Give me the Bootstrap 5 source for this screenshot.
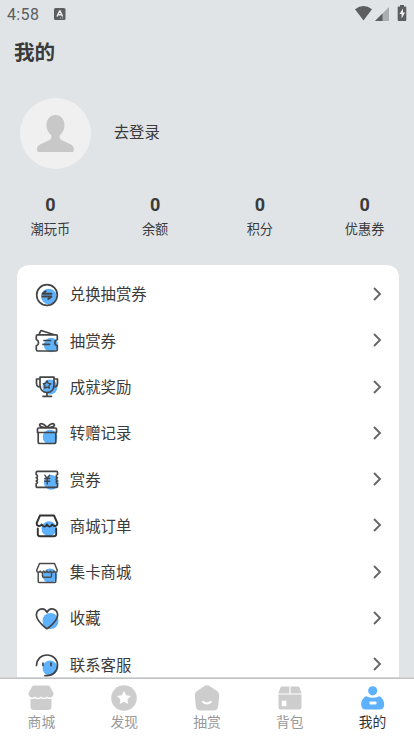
<!DOCTYPE html>
<html lang="zh-CN">
<head>
<meta charset="utf-8">
<meta name="viewport" content="width=device-width, initial-scale=1">
<title>我的</title>
<link href="https://cdn.jsdelivr.net/npm/bootstrap@5.3.0/dist/css/bootstrap.min.css" rel="stylesheet">
<style>
body{height:736px;background:#e0e4e7;color:#3b3b3b;font-family:Roboto,"Noto Sans CJK SC",sans-serif}
.status{height:28px;padding:0 7px;color:#5c5e60;font-size:16px;line-height:28px;letter-spacing:.35px}
.status span{padding-top:1px}
.title{height:48px;line-height:50px;padding-left:14px;font-size:20.6px;font-weight:700}
.profile{height:70px;margin-top:22px;padding-left:20px;font-size:15.4px}
.profile span{padding-top:2px;margin-left:-1.3px}
.avatar{width:71px;height:71px;background:#f0f0f0}
.stats{margin-top:26px;height:71px;margin-left:-2px;margin-right:-3px}
.num{font-size:18px;line-height:22px;font-weight:700}
.lbl{font-size:13.2px;line-height:20px;margin-top:4px}
.menu{margin:0 15px 0 17px;border-radius:12px 12px 0 0;padding-top:6.6px}
.menu-row{height:46.3px;flex:none;padding:0 16px 0 17.6px;font-size:15.4px}
.menu-row span{margin-left:11.2px;padding-top:2.4px}
.ico{fill:none;stroke:#444;stroke-width:1.7;stroke-linejoin:round;stroke-linecap:round}
.ico .b{fill:#5db1fd;stroke:none}
.chev{fill:none;stroke:#666;stroke-width:1.9;position:relative;top:-.8px}
.tabs{height:58px;flex:none;border-top:1px solid #bfc1c2;box-shadow:0 -1px 0 #d5d7d8;z-index:1}
.tab{color:#999;font-size:13.8px;line-height:20px;padding-top:4.6px}
.tab svg{fill:#cdcdcd;display:block}
.tab div{margin-top:.4px}
.tab.on{color:#333}.tab.on svg{fill:#5db1fd}
</style>
<script src="https://cdn.jsdelivr.net/npm/bootstrap@5.3.0/dist/js/bootstrap.bundle.min.js"></script>
</head>
<body class="d-flex flex-column overflow-hidden">
<header class="status d-flex align-items-center flex-shrink-0">
  <span>4:58</span>
  <svg width="12" height="12" viewBox="0 0 12 12" style="margin-left:15px"><rect width="11.500" height="12" rx="1.500" fill="#5c5e60"/><path d="M3 8.500 5.600 3h.5l2.500 5.500M4.200 6.700h3.300" fill="none" stroke="#eee" stroke-width="1.400"/><path d="M6 10h1m1 0h1" stroke="#ccc"/></svg>
  <svg class="ms-auto" width="55" height="18" viewBox="352 5 55 18"><path d="M355 9.200Q363.500 3 372 9.200L363.500 20.500Z" fill="#5c5e60"/><path d="M389 7v14h-14z" fill="#abaeb0"/><path d="M382.500 13.500V21H375z" fill="#5c5e60"/><path d="M400 6.500V5h4v1.500h1.500q.8 0 .8.800v12.900q0 .8-.8.800h-7q-.8 0-.8-.8V7.300q0-.8.800-.8z" fill="#5c5e60"/><path d="m403 8.500-3.600 5.500h2.200v4.500l3.500-6h-2.100z" fill="#eee"/></svg>
</header>
<h1 class="title m-0 flex-shrink-0">我的</h1>
<section class="profile d-flex align-items-center flex-shrink-0">
  <div class="avatar rounded-circle d-flex justify-content-center align-items-center me-4 flex-shrink-0">
    <svg width="71" height="71" viewBox="0 0 71 71"><path d="M35.500 17c5.500 0 9 4.500 9 10 0 4.500-2 8-4.700 10.200-.8 3 .7 4.500 3.700 5.800l7 3.200c3 1.400 3.500 3.500 3.300 6.300q-.2 1.500-1.700 1.500H18.800q-1.700 0-1.800-1.500c-.2-2.800.5-4.900 3.500-6.300l7-3.200c3-1.300 4.500-2.800 3.700-5.800-2.700-2.200-4.700-5.700-4.700-10.200 0-5.500 3.500-10 9-10z" fill="#c8c8c8"/></svg>
  </div>
  <span>去登录</span>
</section>
<section class="stats d-flex text-center flex-shrink-0">
  <div class="col"><div class="num">0</div><div class="lbl">潮玩币</div></div>
  <div class="col"><div class="num">0</div><div class="lbl">余额</div></div>
  <div class="col"><div class="num">0</div><div class="lbl">积分</div></div>
  <div class="col"><div class="num">0</div><div class="lbl">优惠券</div></div>
</section>
<main class="menu bg-white d-flex flex-column flex-grow-1 overflow-hidden">
  <div class="menu-row d-flex align-items-center"><svg class="ico" width="24" height="24"><circle class="b" cx="13.800" cy="13.500" r="7.800"/><circle cx="12" cy="12" r="10.300"/><path d="M7.500 10.700h9M7.700 10.500l3-2.200M7.500 13.500h9M16.300 13.700l-3 2.400" stroke-width="1.900"/></svg><span>兑换抽赏券</span><svg class="chev ms-auto" width="12" height="16"><path d="m3 2 6 6-6 6"/></svg></div>
  <div class="menu-row d-flex align-items-center"><svg class="ico" width="24" height="24"><circle class="b" cx="16" cy="16" r="7.200"/><path d="M2.500 5.800h18.500q1.300 0 1.300 1.200v3.500c-3.300 1.300-3.300 5 0 6.300v3.700q0 1.500-1.500 1.500h-18q-1.500 0-1.500-1.500v-3.700c3-1.300 3-5 0-6.300V7.300q0-1.500 1.200-1.500zM4 5.500l1.500-3.200q.4-.8 1.300-.5L18.500 5.500M9 11.500h6.500M8 15.300h6.500"/></svg><span>抽赏券</span><svg class="chev ms-auto" width="12" height="16"><path d="m3 2 6 6-6 6"/></svg></div>
  <div class="menu-row d-flex align-items-center"><svg class="ico" width="24" height="24"><circle class="b" cx="15" cy="12" r="7.500"/><path d="M5 2.200h14V10c0 4-2.300 7.500-7 7.500S5 14 5 10zM5 4H1.500v4.500c0 2.300 1.600 3.500 4 3.700M19 4h3.500v4.500c0 2.300-1.600 3.500-4 3.700M12 17.500v3.500M8 21.300h8.500"/><path d="m12 5.900 1.200 2.400 2.600.4-1.900 1.900.4 2.600-2.300-1.200-2.300 1.200.4-2.600-1.900-1.900 2.600-.4z" stroke-width="1.300"/></svg><span>成就奖励</span><svg class="chev ms-auto" width="12" height="16"><path d="m3 2 6 6-6 6"/></svg></div>
  <div class="menu-row d-flex align-items-center"><svg class="ico" width="24" height="24"><circle class="b" cx="15" cy="15" r="7.300"/><path d="M3.500 6h17q1 0 1 1v3.500h-19V7q0-1 1-1zM3.200 10.500v9.200q0 1.800 1.800 1.800h14q1.800 0 1.800-1.800v-9.200M12 5.800C10 2.700 6.500.8 5 2.200S6 5.800 12 5.800zM12 5.800C14 2.700 17.500.8 19 2.200S18 5.800 12 5.800z"/></svg><span>转赠记录</span><svg class="chev ms-auto" width="12" height="16"><path d="m3 2 6 6-6 6"/></svg></div>
  <div class="menu-row d-flex align-items-center"><svg class="ico" width="24" height="24" viewBox="0 0 24.500 24"><circle class="b" cx="16.500" cy="14.500" r="7.500"/><path d="M2.500 3.200h19.500q1 0 1 1v2.200c-1.800.7-1.800 2.700 0 3.300-1.800.7-1.800 2.700 0 3.300-1.800.7-1.800 2 0 2.800v2.800q0 1-1 1H2.500q-1.300 0-1.300-1.300v-2.500c1.800-.8 1.800-2.100 0-2.800 1.800-.6 1.800-2.600 0-3.300 1.800-.6 1.800-2.600 0-3.300V4.500q0-1.300 1.300-1.300z"/><path d="m10 7 2.500 3.300L15 7M12.500 10.300v5.700M10 10.500h5M10 13.300h5" stroke-width="1.400"/></svg><span>赏券</span><svg class="chev ms-auto" width="12" height="16"><path d="m3 2 6 6-6 6"/></svg></div>
  <div class="menu-row d-flex align-items-center"><svg class="ico" width="24" height="24"><circle class="b" cx="14" cy="14.800" r="7.500"/><path d="M5 1.500h14l3.300 7.500c.3 3-3.300 4.200-5 1.400-1.700 3-4 3-5.300 0-1.300 3-3.600 3-5.300 0-1.700 2.800-5.300 1.600-5-1.400zM2.800 14.500v5.500q0 2.200 2.200 2.200h14q2.200 0 2.200-2.200v-5.500" stroke="#333" stroke-width="1.900"/></svg><span>商城订单</span><svg class="chev ms-auto" width="12" height="16"><path d="m3 2 6 6-6 6"/></svg></div>
  <div class="menu-row d-flex align-items-center"><svg class="ico" width="24" height="24"><circle class="b" cx="15" cy="14.800" r="7.300"/><path stroke-width="1.500" stroke="#4c4c4c" d="M4.500 2.500h15l2.800 6.800c0 2.500-2.600 2.500-3.500.8-.7 1.700-2.800 1.700-3.400 0-.7 1.700-2.700 1.700-3.400 0-.7 1.700-2.700 1.700-3.400 0-.6 1.700-2.700 1.700-3.400 0-.9 1.700-3.500 1.700-3.500-.8zM3.200 11v9.500q0 1 1 1h15.600q1 0 1-1V11M7.500 11.500v3.800q0 1 1 1h7q1 0 1-1v-3.800"/></svg><span>集卡商城</span><svg class="chev ms-auto" width="12" height="16"><path d="m3 2 6 6-6 6"/></svg></div>
  <div class="menu-row d-flex align-items-center"><svg class="ico" width="24" height="24"><circle class="b" cx="15.500" cy="14" r="8"/><path d="M12 5.300C9-.7 1.400 1.800 1.400 8.200c0 4.800 4.600 8.800 9.400 12.800q1.200 1 2.400 0c4.800-4 9.400-8 9.400-12.800C22.600 1.800 15-.7 12 5.300z"/></svg><span>收藏</span><svg class="chev ms-auto" width="12" height="16"><path d="m3 2 6 6-6 6"/></svg></div>
  <div class="menu-row d-flex align-items-center"><svg class="ico" width="24" height="24"><circle class="b" cx="15" cy="15" r="7.500"/><path d="M1.500 12.500C1.800 6 6 2 12 2s10.500 4.300 10.500 10.200S18 22.700 12 22.700h-2M8 10v2.400M16 10v2.400"/></svg><span>联系客服</span><svg class="chev ms-auto" width="12" height="16"><path d="m3 2 6 6-6 6"/></svg></div>
</main>
<nav class="tabs bg-white d-flex">
  <a class="tab col d-flex flex-column align-items-center text-decoration-none" href="#"><svg width="28" height="28"><path d="M7 1.500h14q1.300 0 2 1.200l3.300 6c1 4-3.300 6.300-6.300 3.800-2 1.800-4.300 1.800-6 0-1.700 1.800-4 1.800-6 0-3 2.500-7.300.2-6.300-3.800l3.300-6Q5.700 1.500 7 1.500z"/><path d="M3.500 15c2 .3 3.300 0 4.500-.8 2 1.300 4 1.300 6 0 2 1.300 4 1.300 6 0 1.200.8 2.500 1.100 4.500.8v7.500q0 3.500-3.500 3.500H7q-3.500 0-3.500-3.500z"/></svg><div>商城</div></a>
  <a class="tab col d-flex flex-column align-items-center text-decoration-none" href="#"><svg width="28" height="28"><circle cx="14" cy="14" r="12.800"/><path d="m14 6.900 2.100 4.300 4.800.7-3.500 3.400.8 4.800-4.200-2.300-4.300 2.300.8-4.800L7 11.900l4.800-.7z" fill="#fff"/></svg><div>发现</div></a>
  <a class="tab col d-flex flex-column align-items-center text-decoration-none" href="#"><svg width="28" height="28"><path d="M11.500 1.900q2.500-1.500 5 0l7.500 5q2.500 1.700 2.200 4.500l-1 10.500q-.4 4.500-4.700 4.500h-13q-4.300 0-4.700-4.500l-1-10.500Q1.500 8.600 4 6.900z"/><path d="M10 17.800q4 3.500 8 0" fill="none" stroke="#fff" stroke-width="2" stroke-linecap="round"/></svg><div>抽赏</div></a>
  <a class="tab col d-flex flex-column align-items-center text-decoration-none" href="#"><svg width="28" height="28"><path d="M6 2.500h7.400v7H2.300L4.500 3.500Q5 2.500 6 2.500zM14.600 2.500H22q1 0 1.500 1l2.200 6H14.600zM2.500 10.500h23v12.500q0 2.500-2.500 2.500H5q-2.500 0-2.500-2.500z"/><path d="M5.800 16.700h4.600v5.500H5.800z" fill="#fff"/></svg><div>背包</div></a>
  <a class="tab on col d-flex flex-column align-items-center text-decoration-none" href="#"><svg width="28" height="28"><circle cx="13.700" cy="6.800" r="4.600"/><path d="M7.200 12.200q6.500 3 13 0c3 1.200 5 4.500 5 8 0 3.500-1.500 5.400-4.500 5.400h-14c-3 0-4.500-1.900-4.500-5.400 0-3.500 2-6.800 5-8z"/><rect x="10.500" y="17.500" width="7" height="3" rx="1" fill="#fff"/></svg><div>我的</div></a>
</nav>
</body>
</html>
